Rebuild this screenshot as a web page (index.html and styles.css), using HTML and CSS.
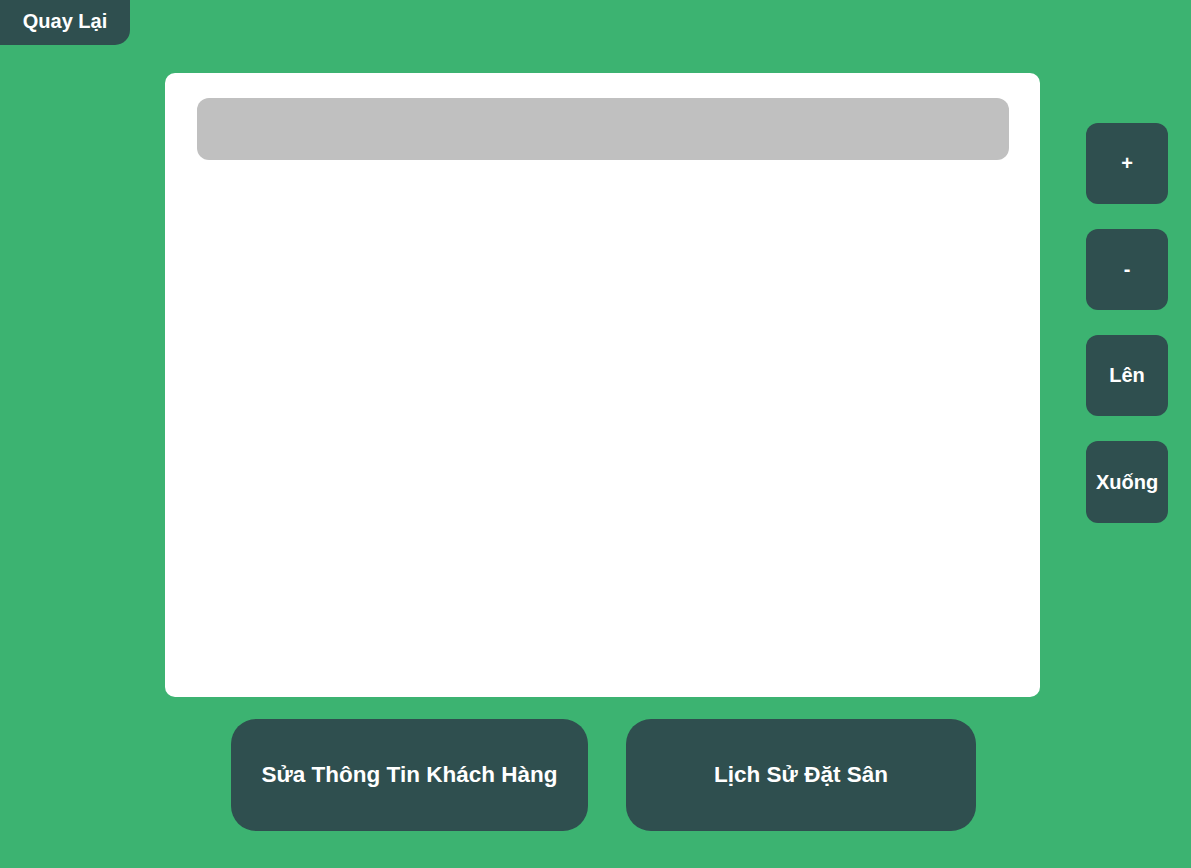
FILE: index.html
```html
<!DOCTYPE html>
<html lang="vi">
<head>
<meta charset="utf-8">
<title>Khách Hàng</title>
<link rel="stylesheet" href="styles.css">
</head>
<body>
<button class="back">Quay Lại</button>
<div class="layout">
  <div class="center">
    <div class="panel">
      <div class="bar"></div>
    </div>
    <div class="actions">
      <button class="action action-edit">Sửa Thông Tin Khách Hàng</button>
      <button class="action action-history">Lịch Sử Đặt Sân</button>
    </div>
  </div>
  <div class="side">
    <button class="side-btn">+</button>
    <button class="side-btn">-</button>
    <button class="side-btn">Lên</button>
    <button class="side-btn tall">Xuống</button>
  </div>
</div>
</body>
</html>
```
FILE: styles.css
```css
html, body {
  margin: 0;
  padding: 0;
}
body {
  background: #3cb371;
  height: 868px;
  font-family: "Liberation Sans", Arial, sans-serif;
  overflow: hidden;
}
button {
  font-family: "Liberation Sans", Arial, sans-serif;
  font-weight: bold;
  color: #ffffff;
  background: #2f4f4f;
  border: none;
  padding: 0;
  margin: 0;
  cursor: pointer;
}
.back {
  display: block;
  width: 130px;
  height: 45px;
  font-size: 20px;
  border-radius: 0 0 15px 0;
  padding-bottom: 3px;
}
.layout {
  display: flex;
  align-items: flex-start;
  padding-left: 165px;
  margin-top: 28px;
}
.center {
  display: flex;
  flex-direction: column;
  width: 875px;
}
.panel {
  background: #ffffff;
  height: 624px;
  border-radius: 10px;
  padding: 25px 31px 0 32px;
  box-sizing: border-box;
}
.bar {
  height: 62px;
  background: #c0c0c0;
  border-radius: 12px;
}
.actions {
  display: flex;
  gap: 38px;
  margin-top: 22px;
  padding-left: 66px;
}
.action {
  height: 112px;
  border-radius: 25px;
  font-size: 22.5px;
}
.action-edit {
  width: 357px;
}
.action-history {
  width: 350px;
}
.side {
  display: flex;
  flex-direction: column;
  gap: 25px;
  margin-left: 46px;
  padding-top: 50px;
}
.side-btn {
  width: 82px;
  height: 81px;
  border-radius: 12px;
  font-size: 20px;
}
.side-btn.tall {
  height: 82px;
}
```
